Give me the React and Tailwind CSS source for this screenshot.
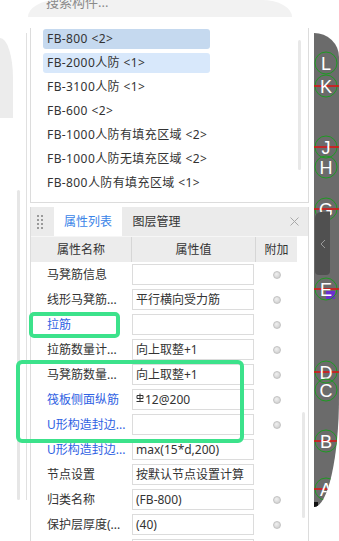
import React from 'react';

const listItems = [
  { label: 'FB-800 <2>', bg: 'bg-[#c5d9ef]' },
  { label: 'FB-2000人防 <1>', bg: 'bg-[#d8e8fb]' },
  { label: 'FB-3100人防 <1>', bg: '' },
  { label: 'FB-600 <2>', bg: '' },
  { label: 'FB-1000人防有填充区域 <2>', bg: '' },
  { label: 'FB-1000人防无填充区域 <2>', bg: '' },
  { label: 'FB-800人防有填充区域 <1>', bg: '' },
];

const rows = [
  { name: '马凳筋信息', value: '', dot: true },
  { name: '线形马凳筋...', value: '平行横向受力筋', dot: true },
  { name: '拉筋', value: '', dot: true, blue: true },
  { name: '拉筋数量计...', value: '向上取整+1', dot: true },
  { name: '马凳筋数量...', value: '向上取整+1', dot: true },
  { name: '筏板侧面纵筋', value: '12@200', dot: true, blue: true, rebar: true },
  { name: 'U形构造封边...', value: '', dot: true, blue: true },
  { name: 'U形构造封边...', value: 'max(15*d,200)', blue: true },
  { name: '节点设置', value: '按默认节点设置计算' },
  { name: '归类名称', value: '(FB-800)', dot: true },
  { name: '保护层厚度(...', value: '(40)', dot: true },
  { name: '', value: '', dot: true },
];

// axis bubbles in the 3D view strip (strip coords: x from 314, y from 33)
const axes = [
  { l: 'L', y: 30, red: false },
  { l: 'K', y: 53, red: true },
  { l: 'J', y: 114, red: true },
  { l: 'H', y: 134, red: false },
  { l: 'G', y: 176, red: true },
  { l: 'E', y: 256, red: true },
  { l: 'D', y: 339, red: true },
  { l: 'C', y: 357, red: false },
  { l: 'B', y: 408, red: true },
  { l: 'A', y: 456, red: true },
];

function RebarMark() {
  return (
    <svg width="8" height="10" viewBox="0 0 8 10" className="self-start mt-[3px] mr-[1px]">
      <path d="M1 2.5h6v3H1z" fill="none" stroke="#333" strokeWidth="1" />
      <path d="M4 0.5v8M0.5 8.5h7" fill="none" stroke="#333" strokeWidth="1" />
    </svg>
  );
}

function ViewStrip() {
  return (
    <div className="relative w-[25px] h-[474px] mt-[16px] bg-[#6b6b6b] rounded-tr-[25px_24px] rounded-br-[25px_110px] overflow-hidden">
      <svg width="25" height="474" viewBox="0 0 25 474">
        <rect x="12" y="258" width="9" height="8" fill="#6a2fd0" />
        {axes.map((a) => (
          <g key={a.l}>
            <circle cx="12" cy={a.y} r="11" fill="none" stroke="#1e9a22" strokeWidth="1" />
            {a.red && <line x1="0" x2="25" y1={a.y} y2={a.y} stroke="#e01010" strokeWidth="1.5" />}
            <text x="12" y={a.y + 6.5} textAnchor="middle" fontSize="18" fill="#ffffff" fontFamily="Liberation Sans, sans-serif">
              {a.l}
            </text>
          </g>
        ))}
        <rect x="0" y="469" width="4" height="5" fill="#111" />
      </svg>
      {/* collapse handle */}
      <div className="absolute left-[1px] top-[179px] w-[15px] h-[63px] bg-[#505050] rounded-b-[4px] rounded-tl-[6px] flex items-center justify-center">
        <svg width="6" height="10" viewBox="0 0 6 10">
          <path d="M5 1L1 5l4 4" fill="none" stroke="#9a9a9a" strokeWidth="1" />
        </svg>
      </div>
    </div>
  );
}

export default function App() {
  return (
    <div className="relative w-[339px] h-[541px] overflow-hidden bg-white text-[12px] text-[#333] font-['Noto_Sans','Noto_Sans_CJK_SC',sans-serif]">
      {/* search bar, cut off at top */}
      <div className="ml-[28px] w-[264px] h-[17px] bg-[#f2f2f2] rounded-tl-[30px_17px] rounded-tr-[30px_17px] overflow-hidden pl-[18px]">
        <div className="-mt-[6px] text-[13px] leading-[17px] text-[#8a8a8a]">搜索构件...</div>
      </div>

      <div className="flex">
        {/* left edge of the window behind */}
        <div className="flex w-[30px]">
          <div className="w-[13px] h-[80px] mt-[21px] bg-[#ececec] rounded-tr-[13px_40px]" />
          <div className="w-[3px] h-[310px] ml-[4px] mt-[173px] bg-[#e6e6e6] rounded-full" />
          <div className="w-px h-[467px] ml-[6px] mt-[16px] bg-[#e0e0e0]" />
        </div>

        {/* component panel */}
        <div className="w-[279px] flex flex-col mt-[11px]">
          {/* component list */}
          <div className="h-[175px] border-x border-b border-[#dcdcdc] flex justify-between pr-[7px]">
            <div className="pl-[12px] pt-[1px]">
              {listItems.map((it) => (
                <div key={it.label} className={`w-[167px] h-[20px] mb-[4px] rounded-[3px] flex items-center pl-[4px] whitespace-nowrap tracking-[0.4px] ${it.bg}`}>
                  {it.label}
                </div>
              ))}
            </div>
            <div className="w-[3px] h-[130px] mt-[12px] bg-[#e8e8e8] rounded-full" />
          </div>

          {/* properties */}
          <div className="mt-[4px] h-[400px] border-x border-[#dcdcdc]">
            <div className="h-[29px] bg-[#ebebeb] flex items-center">
              <div className="grid grid-cols-2 gap-[2px] ml-[6px]">
                {Array.from({ length: 8 }).map((_, i) => (
                  <div key={i} className="w-[2px] h-[2px] bg-[#9a9a9a]" />
                ))}
              </div>
              <div className="w-[68px] h-full ml-[11px] bg-white flex items-center justify-center text-[#3a84e8]">属性列表</div>
              <div className="w-[69px] h-full flex items-center justify-center">图层管理</div>
              <svg width="9" height="9" viewBox="0 0 9 9" className="ml-auto mr-[9px]">
                <path d="M0.5 0.5l8 8M8.5 0.5l-8 8" stroke="#a8a8a8" strokeWidth="1" />
              </svg>
            </div>

            <div className="flex">
              <div className="w-[266px]">
                <div className="h-[26px] bg-[#ececec] border-t border-[#f6f6f6] flex">
                  <div className="w-[101px] border-r border-[#d6d6d6] flex items-center justify-center">属性名称</div>
                  <div className="w-[124px] border-r border-[#d6d6d6] flex items-center justify-center">属性值</div>
                  <div className="flex-1 flex items-center justify-center">附加</div>
                </div>
                {rows.map((r, i) => (
                  <div key={i} className="h-[25px] flex">
                    <div className={`w-[101px] pl-[16px] flex items-center whitespace-nowrap ${r.blue ? 'text-[#2f62e3]' : ''}`}>
                      {r.name}
                    </div>
                    <div className="w-[124px] pt-[2px]">
                      <div className="w-[122px] h-[21px] border border-[#dcdcdc] bg-white flex items-center pl-[3px] whitespace-nowrap overflow-hidden">
                        {r.rebar && <RebarMark />}
                        {r.value}
                      </div>
                    </div>
                    <div className="flex-1 flex items-center justify-center">
                      {r.dot && (
                        <div className="w-[8px] h-[8px] rounded-full border border-[#c2c2c2] bg-[radial-gradient(circle_at_40%_35%,#f0f0f0,#cacaca)]" />
                      )}
                    </div>
                  </div>
                ))}
              </div>
              <div className="w-[11px] flex justify-center pl-[1px]">
                <div className="w-[3px] h-[106px] mt-[176px] bg-[#e8e8e8] rounded-full" />
              </div>
            </div>
          </div>
        </div>

        <div className="ml-[5px]">
          <ViewStrip />
        </div>
      </div>

      {/* annotation frames */}
      <div className="absolute left-[29px] top-[312px] w-[91px] h-[26px] border-4 border-[#3ce28b] rounded-[5px]" />
      <div className="absolute left-[16px] top-[360px] w-[228px] h-[83px] border-4 border-[#3ce28b] rounded-[6px]" />
    </div>
  );
}
